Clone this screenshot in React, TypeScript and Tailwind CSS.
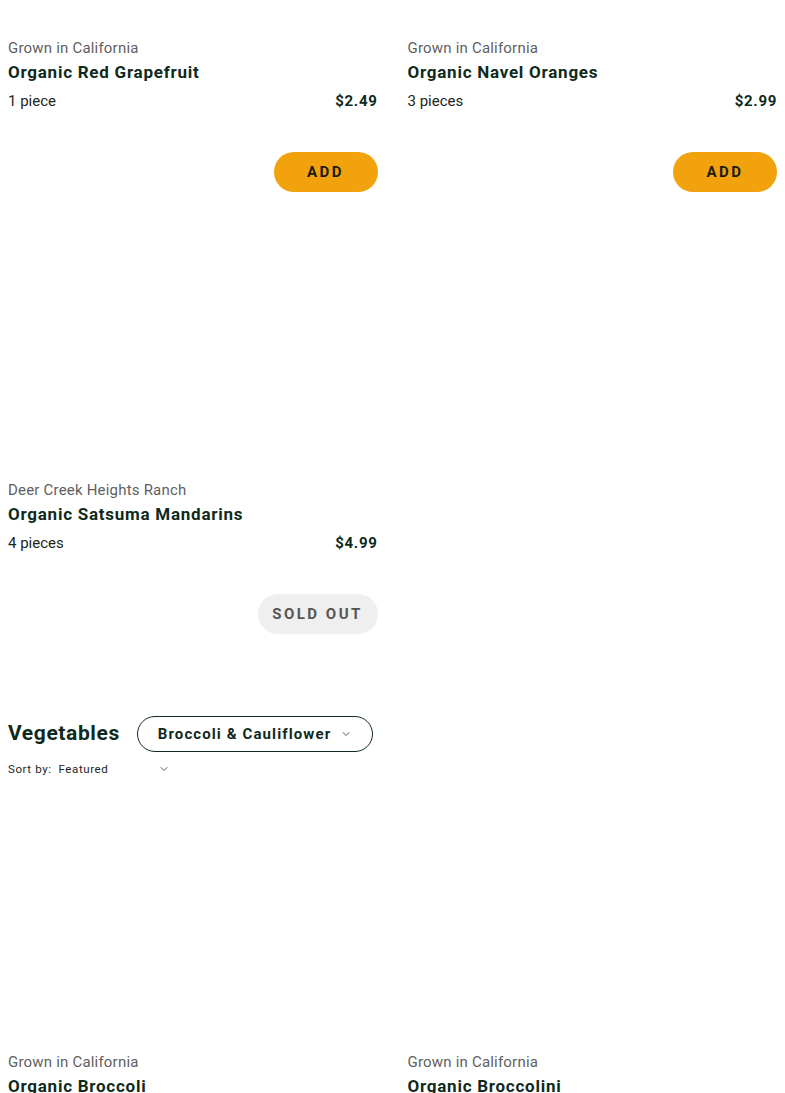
import { ChevronDown } from "lucide-react";

type Product = {
  vendor: string;
  name: string;
  qty: string;
  price: string;
  soldOut?: boolean;
};

const fruits: (Product | null)[] = [
  { vendor: "Grown in California", name: "Organic Red Grapefruit", qty: "1 piece", price: "$2.49" },
  { vendor: "Grown in California", name: "Organic Navel Oranges", qty: "3 pieces", price: "$2.99" },
  { vendor: "Deer Creek Heights Ranch", name: "Organic Satsuma Mandarins", qty: "4 pieces", price: "$4.99", soldOut: true },
  null,
];

const vegetables: Product[] = [
  { vendor: "Grown in California", name: "Organic Broccoli", qty: "1 bunch", price: "$3.49" },
  { vendor: "Grown in California", name: "Organic Broccolini", qty: "1 bunch", price: "$3.99" },
];

function ProductCard({ product, imageClass = "h-[288px]" }: { product: Product; imageClass?: string }) {
  return (
    <div className="flex flex-col">
      {/* product photo area */}
      <div className={`${imageClass} w-full`} />
      <div className="text-[15px] leading-5 tracking-[0.2px] text-[#5f5f5f]">{product.vendor}</div>
      <div className="mt-[2px] text-[17px] font-bold leading-6 tracking-[0.75px] text-[#0f2a1c]">
        {product.name}
      </div>
      <div className="mt-[7px] flex items-center justify-between text-[15px] leading-5 text-[#1c2520]">
        <span>{product.qty}</span>
        <span className="font-bold tracking-[0.7px] text-[#0f2a1c]">{product.price}</span>
      </div>
      <div className="mt-[41px] flex justify-end">
        {product.soldOut ? (
          <button className="h-10 w-[120px] rounded-full bg-[#efefef] text-[15px] font-bold tracking-[2.5px] text-[#555555]">
            SOLD OUT
          </button>
        ) : (
          <button className="h-10 w-[104px] rounded-full bg-[#f2a20c] text-[15px] font-bold tracking-[2.5px] text-[#1b1a12]">
            ADD
          </button>
        )}
      </div>
    </div>
  );
}

export default function App() {
  return (
    <div className="min-h-screen overflow-hidden bg-white px-2 font-['Roboto',sans-serif]">
      <div className="mt-[-250px] grid grid-cols-2 gap-x-[30px]">
        {fruits.map((p, i) => (p ? <ProductCard key={i} product={p} /> : <div key={i} />))}
      </div>

      {/* Vegetables section */}
      <div className="mt-[82px] flex items-center gap-[17px]">
        <h2 className="text-[21px] font-bold tracking-[0.6px] text-[#0f2a1c]">Vegetables</h2>
        <button className="flex h-9 w-[236px] items-center justify-between rounded-full border border-[#0f2a1c] pl-5 pr-5 text-[15px] font-bold tracking-[1.1px] text-[#0f2a1c]">
          Broccoli &amp; Cauliflower
          <ChevronDown className="h-3 w-3" strokeWidth={1.5} />
        </button>
      </div>
      <div className="mt-[9px] flex w-[162px] items-center justify-between text-[11.5px] leading-4 tracking-[0.6px] text-[#1c2520]">
        <span>Sort by:&nbsp; Featured</span>
        <ChevronDown className="h-3 w-3" strokeWidth={1.5} />
      </div>

      <div className="grid grid-cols-2 gap-x-[30px]">
        {vegetables.map((p, i) => (
          <ProductCard key={i} product={p} imageClass="h-[275px]" />
        ))}
      </div>
    </div>
  );
}
